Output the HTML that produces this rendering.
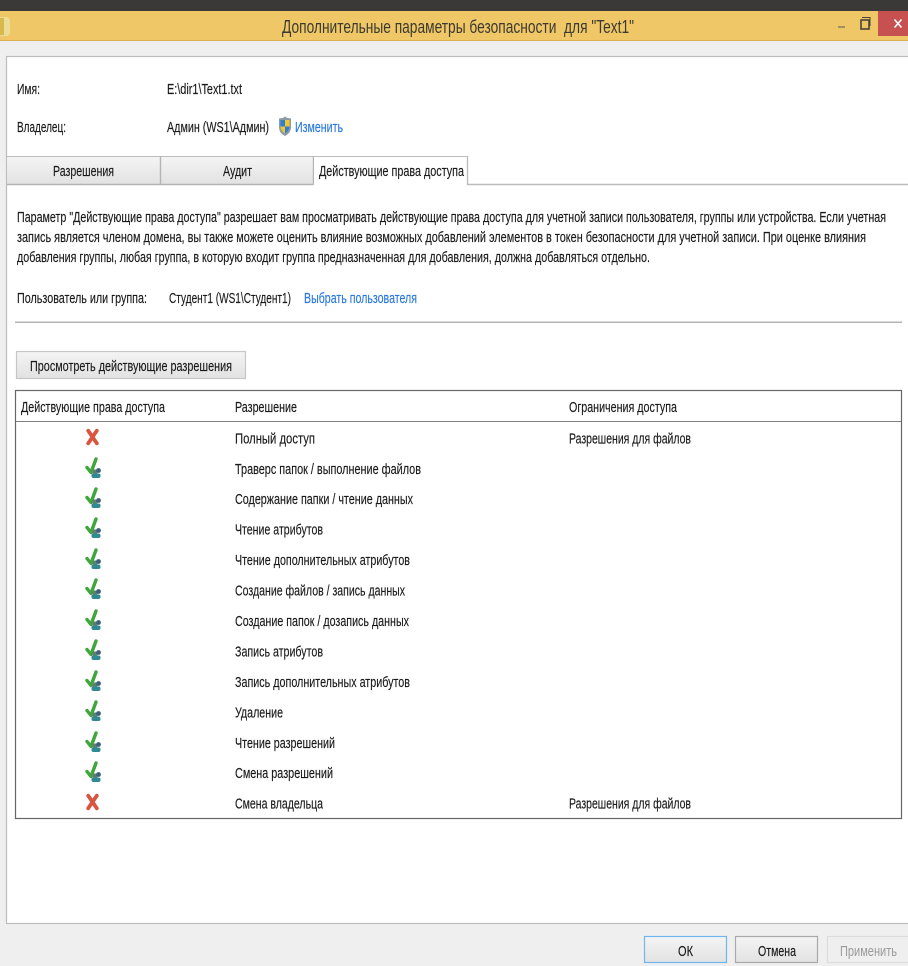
<!DOCTYPE html>
<html lang="ru"><head><meta charset="utf-8"><title>Дополнительные параметры безопасности</title>
<style>
html,body{margin:0;padding:0;background:#fff;width:908px;height:966px;overflow:hidden}
svg{display:block;filter:blur(.35px)}
text{font-family:"Liberation Sans",sans-serif;font-size:15px;fill:#1a1a1a;stroke:#1a1a1a;stroke-width:.15px;white-space:pre}
</style></head><body>
<svg width="908" height="966" viewBox="0 0 908 966" xmlns="http://www.w3.org/2000/svg">
<defs>
<linearGradient id="g" x1="0" y1="0" x2="0" y2="1"><stop offset="0" stop-color="#f4f4f4"/><stop offset="1" stop-color="#e2e2e2"/></linearGradient>
<g id="x"><path d="M-4.300 -6.300L4.300 6.300M4.300 -6.300L-4.300 6.300" fill="none" stroke="#d9553f" stroke-width="3.800" stroke-linecap="round"/></g>
<g id="c"><path d="M-6 -2.500L-2 2.500L3 -11" fill="none" stroke="#3fa53c" stroke-width="3.400" stroke-linecap="round" stroke-linejoin="round"/><circle cx="2" cy="2" r="2.600" fill="#5f7f6f"/><circle cx="5.500" cy="0.500" r="2.400" fill="#3d5f7d"/><rect x="-1.500" y="3.500" width="9" height="4.500" rx="2" fill="#2f8a94"/></g>
</defs>
<rect width="908" height="966" fill="#efefef"/>
<rect width="908" height="11" fill="#3a3938"/>
<rect y="11" width="908" height="30" fill="#efc767"/>
<rect y="40" width="908" height="1" fill="#d9b04f"/>
<path d="M0 17H8L10 20V34L8 36H0Z" fill="#ecdc96"/><rect x="0" y="18" width="4" height="17" fill="#d8b94c"/>
<rect x="878" y="11" width="30" height="25" fill="#c75050"/>
<text x="282" y="33" textLength="352" lengthAdjust="spacingAndGlyphs" style="font-size:18.500px;fill:#3c3a30;stroke:none">Дополнительные параметры безопасности  для "Text1"</text>
<rect x="838" y="26" width="7" height="2" fill="#a0905c"/>
<rect x="861" y="20" width="8" height="9" fill="none" stroke="#4a4536" stroke-width="1.600"/><path d="M862 17.500H870V26" fill="none" stroke="#4a4536"/>
<path d="M894.500 19.500L901.500 27.500M901.500 19.500L894.500 27.500" stroke="#fff" stroke-width="1.600"/>

<rect x="6.500" y="56.500" width="910" height="867" fill="#fff" stroke="#bcbcbc" stroke-width="1.200"/>

<text x="17" y="94" textLength="23" lengthAdjust="spacingAndGlyphs">Имя:</text>
<text x="167" y="94" textLength="75" lengthAdjust="spacingAndGlyphs">E:\dir1\Text1.txt</text>
<text x="17" y="132" textLength="49" lengthAdjust="spacingAndGlyphs">Владелец:</text>
<text x="167" y="132" textLength="102" lengthAdjust="spacingAndGlyphs">Админ (WS1\Админ)</text>
<path d="M279 118.500Q285 118 285 116Q285 118 291 118.500V127Q291 133 285 136Q279 133 279 127Z" fill="#8c9aa6"/>
<path d="M280.500 120H285V126.500H280.500Z" fill="#2f7fd8"/><path d="M285 120H289.500V126.500H285Z" fill="#f2c62e"/><path d="M280.500 126.500H285V133.500Q281 131 280.500 127Z" fill="#f2c62e"/><path d="M285 126.500H289.500V127Q289 131 285 133.500Z" fill="#2f7fd8"/>
<text x="295" y="132" textLength="48" lengthAdjust="spacingAndGlyphs" style="fill:#2a78dc;stroke:#2a78dc">Изменить</text>

<rect x="6" y="156" width="462" height="1.500" fill="#bcbcbc"/>
<rect x="7" y="157" width="153" height="27" fill="url(#g)"/>
<rect x="161" y="157" width="152" height="27" fill="url(#g)"/>
<path d="M160.500 157V185M313.500 157V185M7 184.500H313" stroke="#b4b4b4" stroke-width="1.400" fill="none"/>
<rect x="314" y="157" width="153" height="28" fill="#fff"/>
<path d="M467.500 156.500V184.500H908" stroke="#bcbcbc" stroke-width="1.400" fill="none"/>
<text x="53" y="176" textLength="61" lengthAdjust="spacingAndGlyphs">Разрешения</text>
<text x="223" y="176" textLength="29" lengthAdjust="spacingAndGlyphs">Аудит</text>
<text x="319" y="176" textLength="145" lengthAdjust="spacingAndGlyphs">Действующие права доступа</text>

<text x="17" y="222" textLength="869" lengthAdjust="spacingAndGlyphs">Параметр "Действующие права доступа" разрешает вам просматривать действующие права доступа для учетной записи пользователя, группы или устройства. Если учетная</text>
<text x="17" y="242" textLength="849" lengthAdjust="spacingAndGlyphs">запись является членом домена, вы также можете оценить влияние возможных добавлений элементов в токен безопасности для учетной записи. При оценке влияния</text>
<text x="17" y="262" textLength="633" lengthAdjust="spacingAndGlyphs">добавления группы, любая группа, в которую входит группа предназначенная для добавления, должна добавляться отдельно.</text>

<text x="17" y="303" textLength="130" lengthAdjust="spacingAndGlyphs">Пользователь или группа:</text>
<text x="169" y="303" textLength="122" lengthAdjust="spacingAndGlyphs">Студент1 (WS1\Студент1)</text>
<text x="304" y="303" textLength="113" lengthAdjust="spacingAndGlyphs" style="fill:#2a78dc;stroke:#2a78dc">Выбрать пользователя</text>
<rect x="15" y="321.500" width="887" height="1.500" fill="#b4b4b4"/>

<rect x="16.500" y="351.500" width="229" height="27" fill="url(#g)" stroke="#c6c6c6" stroke-width="1.200"/>
<text x="30" y="371" textLength="202" lengthAdjust="spacingAndGlyphs">Просмотреть действующие разрешения</text>

<rect x="15.500" y="390.500" width="886" height="428" fill="#fff" stroke="#666" stroke-width="1.200"/>
<rect x="16" y="421" width="885" height="1" fill="#808080"/>
<text x="21" y="412" textLength="144" lengthAdjust="spacingAndGlyphs">Действующие права доступа</text>
<text x="235" y="412" textLength="62" lengthAdjust="spacingAndGlyphs">Разрешение</text>
<text x="569" y="412" textLength="108" lengthAdjust="spacingAndGlyphs">Ограничения доступа</text>

<text x="235" y="443.500" textLength="80" lengthAdjust="spacingAndGlyphs">Полный доступ</text>
<text x="569" y="443.500" textLength="122" lengthAdjust="spacingAndGlyphs">Разрешения для файлов</text>
<text x="235" y="474" textLength="186" lengthAdjust="spacingAndGlyphs">Траверс папок / выполнение файлов</text>
<text x="235" y="504" textLength="178" lengthAdjust="spacingAndGlyphs">Содержание папки / чтение данных</text>
<text x="235" y="534.500" textLength="88" lengthAdjust="spacingAndGlyphs">Чтение атрибутов</text>
<text x="235" y="565" textLength="175" lengthAdjust="spacingAndGlyphs">Чтение дополнительных атрибутов</text>
<text x="235" y="595.500" textLength="170" lengthAdjust="spacingAndGlyphs">Создание файлов / запись данных</text>
<text x="235" y="626" textLength="174" lengthAdjust="spacingAndGlyphs">Создание папок / дозапись данных</text>
<text x="235" y="656.500" textLength="88" lengthAdjust="spacingAndGlyphs">Запись атрибутов</text>
<text x="235" y="687" textLength="175" lengthAdjust="spacingAndGlyphs">Запись дополнительных атрибутов</text>
<text x="235" y="717.500" textLength="48" lengthAdjust="spacingAndGlyphs">Удаление</text>
<text x="235" y="748" textLength="100" lengthAdjust="spacingAndGlyphs">Чтение разрешений</text>
<text x="235" y="778" textLength="98" lengthAdjust="spacingAndGlyphs">Смена разрешений</text>
<text x="235" y="808.500" textLength="88" lengthAdjust="spacingAndGlyphs">Смена владельца</text>
<text x="569" y="808.500" textLength="122" lengthAdjust="spacingAndGlyphs">Разрешения для файлов</text>

<use href="#x" x="92.500" y="437"/>
<use href="#c" x="93" y="470"/>
<use href="#c" x="93" y="500"/>
<use href="#c" x="93" y="530"/>
<use href="#c" x="93" y="561"/>
<use href="#c" x="93" y="591"/>
<use href="#c" x="93" y="622"/>
<use href="#c" x="93" y="652"/>
<use href="#c" x="93" y="683"/>
<use href="#c" x="93" y="713"/>
<use href="#c" x="93" y="744"/>
<use href="#c" x="93" y="774"/>
<use href="#x" x="92.500" y="802"/>

<rect x="644.500" y="936.500" width="82" height="26" fill="url(#g)" stroke="#6fb5ef" stroke-width="1.200"/>
<rect x="735.500" y="936.500" width="82" height="26" fill="url(#g)" stroke="#a9a9a9" stroke-width="1.200"/>
<rect x="827.500" y="936.500" width="90" height="26" fill="#efefef" stroke="#dcdcdc" stroke-width="1.200"/>
<text x="678" y="956" textLength="15" lengthAdjust="spacingAndGlyphs">ОК</text>
<text x="758" y="956" textLength="38" lengthAdjust="spacingAndGlyphs">Отмена</text>
<text x="840" y="956" textLength="57" lengthAdjust="spacingAndGlyphs" style="fill:#9a9a9a;stroke:none">Применить</text>
</svg>
</body></html>
